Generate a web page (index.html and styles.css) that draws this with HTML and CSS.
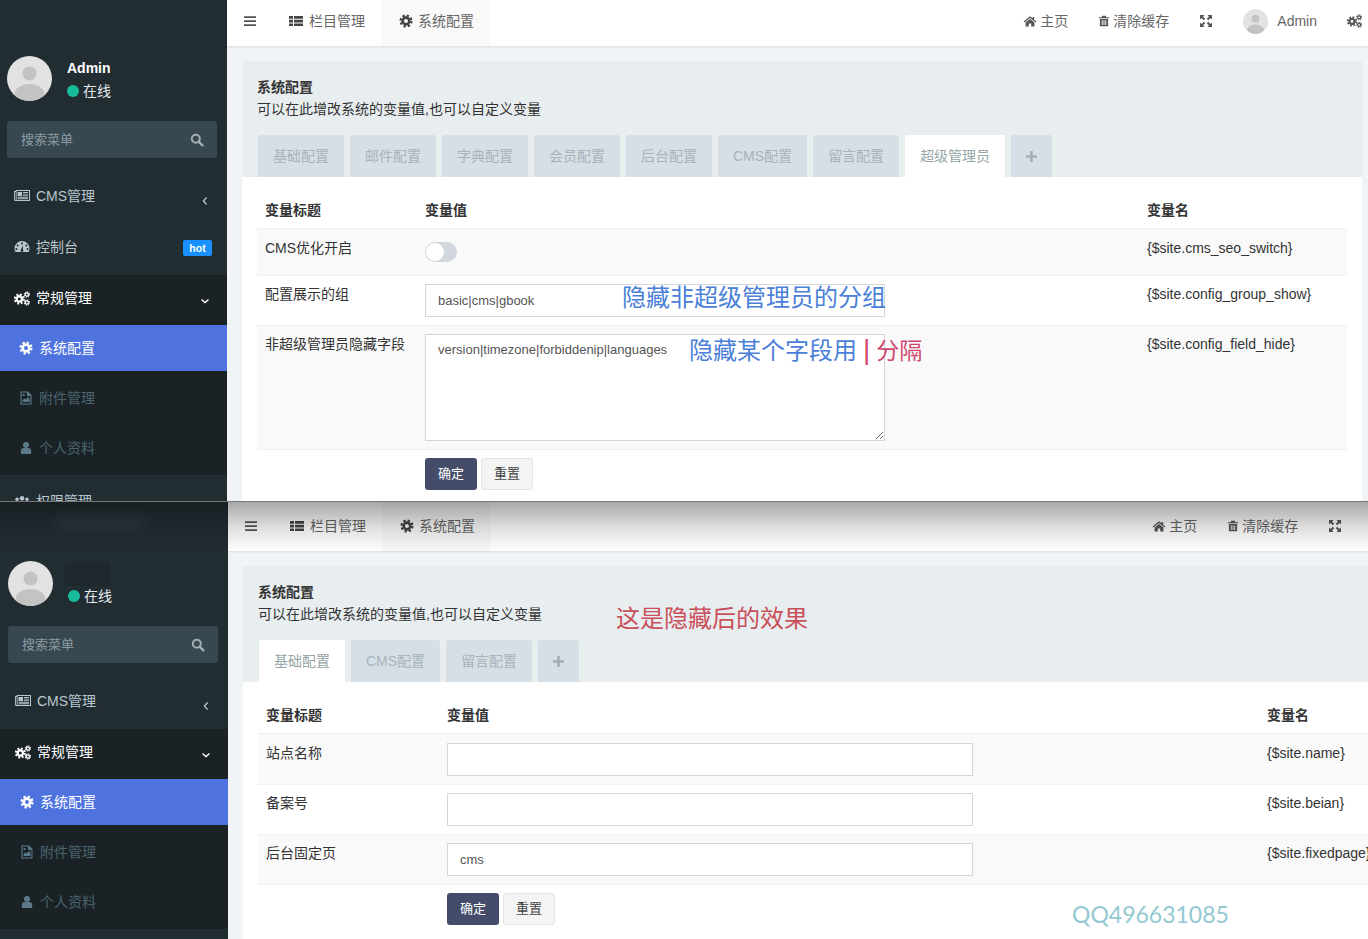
FILE: index.html
```html
<!DOCTYPE html>
<html lang="en">
<head>
    <meta charset="UTF-8">
    <meta name="viewport" content="width=device-width, initial-scale=1.0">
    <title>系统配置</title>
    <link rel="stylesheet" href="styles.css">
</head>
<body>
    <svg class="sprite" xmlns="http://www.w3.org/2000/svg">
        <symbol id="i-bars" viewBox="0 0 14 14"><path d="M1 2.2h12v1.7H1zM1 6.2h12v1.7H1zM1 10.2h12v1.7H1z"/></symbol>
        <symbol id="i-list" viewBox="0 0 14 14"><path d="M0 2h4v2.7H0zM5 2h9v2.7H5zM0 5.7h4v2.7H0zM5 5.7h9v2.7H5zM0 9.4h4v2.7H0zM5 9.4h9v2.7H5z"/></symbol>
        <symbol id="i-cog" viewBox="0 0 16 16"><circle cx="8" cy="8" r="3.8" fill="none" stroke="currentColor" stroke-width="3"/><circle cx="8" cy="8" r="6.2" fill="none" stroke="currentColor" stroke-width="2.6" stroke-dasharray="2.6 2.27"/></symbol>
        <symbol id="i-cogs" viewBox="0 0 18 16"><circle cx="6" cy="8.5" r="3" fill="none" stroke="currentColor" stroke-width="2.6"/><circle cx="6" cy="8.5" r="5" fill="none" stroke="currentColor" stroke-width="2.4" stroke-dasharray="2.1 1.83"/><circle cx="14.5" cy="3.5" r="1.8" fill="none" stroke="currentColor" stroke-width="1.5"/><circle cx="14.5" cy="3.5" r="2.9" fill="none" stroke="currentColor" stroke-width="1.3" stroke-dasharray="1.2 1.08"/><circle cx="14.5" cy="12.5" r="1.8" fill="none" stroke="currentColor" stroke-width="1.5"/><circle cx="14.5" cy="12.5" r="2.9" fill="none" stroke="currentColor" stroke-width="1.3" stroke-dasharray="1.2 1.08"/></symbol>
        <symbol id="i-home" viewBox="0 0 14 14"><path d="M7 2.2 0.6 7.6l.8.9L7 3.9l5.6 4.6.8-.9-2.2-1.9V3h-1.6v1.3zM2.6 8.6V12.4h3.2V9.4h2.4v3h3.2V8.6L7 5z"/></symbol>
        <symbol id="i-trash" viewBox="0 0 14 14"><path fill-rule="evenodd" d="M5 1h4l.8 1.6H13v1.2H1V2.6h3.2zM2.2 4.6h9.6v8.4H2.2zM4.4 6v5.6h1V6zM6.5 6v5.6h1V6zM8.6 6v5.6h1V6z"/></symbol>
        <symbol id="i-expand" viewBox="0 0 14 14"><path d="M1 1h4.6L4 2.6 6.2 4.8 4.8 6.2 2.6 4 1 5.6zM13 1v4.6L11.4 4 9.2 6.2 7.8 4.8 10 2.6 8.4 1zM1 13V8.4L2.6 10l2.2-2.2 1.4 1.4L4 11.4 5.6 13zM13 13H8.4l1.6-1.6-2.2-2.2 1.4-1.4 2.2 2.2L13 8.4z"/></symbol>
        <symbol id="i-search" viewBox="0 0 14 14"><circle cx="5.8" cy="5.8" r="4" fill="none" stroke="currentColor" stroke-width="2"/><path d="M8.6 8.6 12.4 12.4" stroke="currentColor" stroke-width="2.4" stroke-linecap="round"/></symbol>
        <symbol id="i-news" viewBox="0 0 16 14"><path fill-rule="evenodd" d="M0 2.5h1.6V1.5H16V12.5H1.5A1.5 1.5 0 0 1 0 11zM2.6 2.5V11.5H15V2.5zM.9 3.4V11a.6.6 0 0 0 .8.5V3.4zM3.6 3.6H8V7.4H3.6zM9 3.6h5v.9H9zM9 5.2h5v.9H9zM9 6.7h5v.9H9zM3.6 8.3H14v.9H3.6zM3.6 9.8H14v.9H3.6z"/></symbol>
        <symbol id="i-dash" viewBox="0 0 16 14"><path fill-rule="evenodd" d="M8 1.5A7.5 7.5 0 0 0 .5 9c0 1.4.4 2.6 1 3.5h13c.6-.9 1-2.1 1-3.5A7.5 7.5 0 0 0 8 1.5zM8 3a1 1 0 1 1 0 2 1 1 0 0 1 0-2zM3.6 5a1 1 0 1 1 0 2 1 1 0 0 1 0-2zM12.4 5a1 1 0 1 1 0 2 1 1 0 0 1 0-2zM2.4 8.6a1 1 0 1 1 0 2 1 1 0 0 1 0-2zM13.6 8.6a1 1 0 1 1 0 2 1 1 0 0 1 0-2zM8.7 6 9 10a1.4 1.4 0 1 1-2 0z"/></symbol>
        <symbol id="i-file" viewBox="0 0 14 14"><path fill-rule="evenodd" d="M1.5 0.5H9L12.5 4V13.5H1.5zM2.6 1.6V12.4H11.4V5H8V1.6zM3.6 3h2v2h-2zM3.6 11V9l2-1.6 1.4 1 2-2.4 1.5 1.8V11z"/></symbol>
        <symbol id="i-user" viewBox="0 0 14 14"><circle cx="7" cy="4" r="3"/><path d="M1.8 13V10a3 3 0 0 1 3-3h4.4a3 3 0 0 1 3 3v3z"/></symbol>
        <symbol id="i-users" viewBox="0 0 18 14"><circle cx="9" cy="4.5" r="2.6"/><path d="M5 12V10a2.5 2.5 0 0 1 2.5-2.5h3A2.5 2.5 0 0 1 13 10v2z"/><circle cx="3.4" cy="5.6" r="1.9"/><circle cx="14.6" cy="5.6" r="1.9"/><path d="M.5 11V9.4A1.8 1.8 0 0 1 2.3 8h1.9L4 11zM17.5 11V9.4A1.8 1.8 0 0 0 15.7 8h-1.9L14 11z"/></symbol>
        <symbol id="i-left" viewBox="0 0 8 10"><path d="M5.6 1.5 2.4 5l3.2 3.5" fill="none" stroke="currentColor" stroke-width="1.3"/></symbol>
        <symbol id="i-down" viewBox="0 0 10 8"><path d="M1.5 2.4 5 5.6l3.5-3.2" fill="none" stroke="currentColor" stroke-width="1.3"/></symbol>
        <symbol id="i-plus" viewBox="0 0 12 12"><path d="M4.6 0h2.8v4.6H12v2.8H7.4V12H4.6V7.4H0V4.6h4.6z"/></symbol>
        <symbol id="i-avatar" viewBox="0 0 45 45"><clipPath id="avatar-clip"><circle cx="22.5" cy="22.5" r="22.5"/></clipPath><g clip-path="url(#avatar-clip)"><rect width="45" height="45" fill="#e2e2e2"/><circle cx="22.5" cy="17.5" r="7" fill="#c3c3c3"/><ellipse cx="22.5" cy="38" rx="15" ry="10" fill="#c3c3c3"/></g></symbol>
    </svg>

    <!-- top screenshot -->
    <section class="shot shot-a">
        <aside class="sidebar">
            <div class="user-panel">
                <svg class="avatar"><use href="#i-avatar"/></svg>
                <div class="user-info">
                    <div class="user-name">Admin</div>
                    <div class="user-state"><span class="dot"></span>在线</div>
                </div>
            </div>
            <div class="side-search">
                <span>搜索菜单</span>
                <svg class="ico"><use href="#i-search"/></svg>
            </div>
            <ul class="menu">
                <li class="menu-item"><svg class="ico"><use href="#i-news"/></svg><span>CMS管理</span><svg class="arrow"><use href="#i-left"/></svg></li>
                <li class="menu-item"><svg class="ico"><use href="#i-dash"/></svg><span>控制台</span><b class="hot">hot</b></li>
                <li class="menu-item menu-open"><svg class="ico"><use href="#i-cogs"/></svg><span>常规管理</span><svg class="arrow"><use href="#i-down"/></svg></li>
                <li class="sub-item sub-active"><svg class="ico"><use href="#i-cog"/></svg><span>系统配置</span></li>
                <li class="sub-item sub-middle"><svg class="ico"><use href="#i-file"/></svg><span>附件管理</span></li>
                <li class="sub-item sub-last"><svg class="ico"><use href="#i-user"/></svg><span>个人资料</span></li>
                <li class="menu-item menu-after"><svg class="ico"><use href="#i-users"/></svg><span>权限管理</span></li>
            </ul>
        </aside>
        <div class="main">
            <nav class="navbar">
                <div class="nav-left">
                    <svg class="ico nav-toggle"><use href="#i-bars"/></svg>
                    <a class="nav-link"><svg class="ico"><use href="#i-list"/></svg>栏目管理</a>
                    <a class="nav-link nav-current"><svg class="ico"><use href="#i-cog"/></svg>系统配置</a>
                </div>
                <div class="nav-right">
                    <a class="nav-tool"><svg class="ico"><use href="#i-home"/></svg>主页</a>
                    <a class="nav-tool"><svg class="ico ico-trash"><use href="#i-trash"/></svg>清除缓存</a>
                    <a class="nav-tool"><svg class="ico ico-expand"><use href="#i-expand"/></svg></a>
                    <a class="nav-tool"><svg class="avatar-small"><use href="#i-avatar"/></svg>Admin</a>
                    <a class="nav-tool"><svg class="ico ico-cogs"><use href="#i-cogs"/></svg></a>
                </div>
            </nav>
            <div class="content">
                <div class="panel">
                    <div class="panel-head">
                        <div class="panel-title">系统配置</div>
                        <div class="panel-desc">可以在此增改系统的变量值,也可以自定义变量</div>
                        <ul class="tabs">
                            <li>基础配置</li>
                            <li>邮件配置</li>
                            <li>字典配置</li>
                            <li>会员配置</li>
                            <li>后台配置</li>
                            <li>CMS配置</li>
                            <li>留言配置</li>
                            <li class="tab-active">超级管理员</li>
                            <li class="tab-add"><svg class="ico"><use href="#i-plus"/></svg></li>
                        </ul>
                    </div>
                    <div class="panel-body">
                        <table class="config">
                            <thead>
                                <tr><th class="col-title">变量标题</th><th class="col-value">变量值</th><th>变量名</th></tr>
                            </thead>
                            <tbody>
                                <tr class="row-odd row-switch">
                                    <td>CMS优化开启</td>
                                    <td><div class="switch"></div></td>
                                    <td>{$site.cms_seo_switch}</td>
                                </tr>
                                <tr>
                                    <td>配置展示的组</td>
                                    <td><input class="field" type="text" value="basic|cms|gbook"></td>
                                    <td>{$site.config_group_show}</td>
                                </tr>
                                <tr class="row-odd">
                                    <td>非超级管理员隐藏字段</td>
                                    <td><textarea class="field field-area">version|timezone|forbiddenip|languages</textarea></td>
                                    <td>{$site.config_field_hide}</td>
                                </tr>
                                <tr>
                                    <td></td>
                                    <td><button class="btn btn-ok">确定</button><button class="btn btn-reset">重置</button></td>
                                    <td></td>
                                </tr>
                            </tbody>
                        </table>
                    </div>
                </div>
            </div>
        </div>
        <div class="note note-group">隐藏非超级管理员的分组</div>
        <div class="note note-field">隐藏某个字段用<i class="note-pipe">|</i><em>分隔</em></div>
    </section>

    <!-- bottom screenshot -->
    <section class="shot shot-b">
        <aside class="sidebar">
            <div class="smudge"></div>
            <div class="user-panel">
                <svg class="avatar"><use href="#i-avatar"/></svg>
                <div class="user-info">
                    <div class="user-name user-hidden"></div>
                    <div class="user-state"><span class="dot"></span>在线</div>
                </div>
            </div>
            <div class="side-search">
                <span>搜索菜单</span>
                <svg class="ico"><use href="#i-search"/></svg>
            </div>
            <ul class="menu">
                <li class="menu-item"><svg class="ico"><use href="#i-news"/></svg><span>CMS管理</span><svg class="arrow"><use href="#i-left"/></svg></li>
                <li class="menu-item menu-open"><svg class="ico"><use href="#i-cogs"/></svg><span>常规管理</span><svg class="arrow"><use href="#i-down"/></svg></li>
                <li class="sub-item sub-active"><svg class="ico"><use href="#i-cog"/></svg><span>系统配置</span></li>
                <li class="sub-item sub-middle"><svg class="ico"><use href="#i-file"/></svg><span>附件管理</span></li>
                <li class="sub-item sub-last"><svg class="ico"><use href="#i-user"/></svg><span>个人资料</span></li>
            </ul>
        </aside>
        <div class="main">
            <nav class="navbar">
                <div class="nav-left">
                    <svg class="ico nav-toggle"><use href="#i-bars"/></svg>
                    <a class="nav-link"><svg class="ico"><use href="#i-list"/></svg>栏目管理</a>
                    <a class="nav-link nav-current"><svg class="ico"><use href="#i-cog"/></svg>系统配置</a>
                </div>
                <div class="nav-right">
                    <a class="nav-tool"><svg class="ico"><use href="#i-home"/></svg>主页</a>
                    <a class="nav-tool"><svg class="ico ico-trash"><use href="#i-trash"/></svg>清除缓存</a>
                    <a class="nav-tool"><svg class="ico ico-expand"><use href="#i-expand"/></svg></a>
                    <a class="nav-tool"><svg class="avatar-small"><use href="#i-avatar"/></svg>Admin</a>
                    <a class="nav-tool"><svg class="ico ico-cogs"><use href="#i-cogs"/></svg></a>
                </div>
            </nav>
            <div class="content">
                <div class="panel">
                    <div class="panel-head">
                        <div class="panel-title">系统配置</div>
                        <div class="panel-desc">可以在此增改系统的变量值,也可以自定义变量</div>
                        <ul class="tabs">
                            <li class="tab-active">基础配置</li>
                            <li>CMS配置</li>
                            <li>留言配置</li>
                            <li class="tab-add"><svg class="ico"><use href="#i-plus"/></svg></li>
                        </ul>
                    </div>
                    <div class="panel-body">
                        <table class="config">
                            <thead>
                                <tr><th class="col-title">变量标题</th><th class="col-value">变量值</th><th>变量名</th></tr>
                            </thead>
                            <tbody>
                                <tr class="row-odd">
                                    <td>站点名称</td>
                                    <td><input class="field" type="text" value=""></td>
                                    <td>{$site.name}</td>
                                </tr>
                                <tr>
                                    <td>备案号</td>
                                    <td><input class="field" type="text" value=""></td>
                                    <td>{$site.beian}</td>
                                </tr>
                                <tr class="row-odd">
                                    <td>后台固定页</td>
                                    <td><input class="field" type="text" value="cms"></td>
                                    <td>{$site.fixedpage}</td>
                                </tr>
                                <tr>
                                    <td></td>
                                    <td><button class="btn btn-ok">确定</button><button class="btn btn-reset">重置</button></td>
                                    <td></td>
                                </tr>
                            </tbody>
                        </table>
                    </div>
                </div>
            </div>
        </div>
        <div class="note note-result">这是隐藏后的效果</div>
        <div class="note note-qq">QQ496631085</div>
    </section>
</body>
</html>
```

FILE: styles.css
```css
* {
    box-sizing: border-box;
}
html, body {
    margin: 0;
    padding: 0;
    height: 939px;
    overflow: hidden;
}
body {
    background-color: #f1f4f6;
    color: #444;
    font-family: "Liberation Sans", "Noto Sans CJK SC", sans-serif;
    font-size: 14px;
    line-height: 20px;
}
ul {
    list-style: none;
    margin: 0;
    padding: 0;
}
.sprite {
    position: absolute;
    width: 0;
    height: 0;
}
.ico {
    width: 14px;
    height: 14px;
    fill: currentColor;
    flex: none;
}

/* the picture is two screenshots stacked */
.shot {
    position: relative;
    display: flex;
    overflow: hidden;
}
.shot-a {
    height: 502px;
    --side-x: 0px;
    --side-top: 56px;
    --nav-height: 46px;
    --nav-lift: 4px;
    border-bottom: 1px solid #777;
}
.shot-b {
    height: 437px;
    --side-x: 1px;
    --side-top: 59px;
    --nav-height: 49px;
    --nav-lift: 1px;
}
/* shadow the top screenshot drops on the bottom one */
.shot-b::before {
    content: "";
    position: absolute;
    left: 228px;
    right: 0;
    top: 0;
    height: 50px;
    background: linear-gradient(rgba(0, 0, 0, 0.34), rgba(0, 0, 0, 0.12) 26px, rgba(0, 0, 0, 0));
    z-index: 3;
}
.shot-b::after {
    content: "";
    position: absolute;
    left: 0;
    width: 228px;
    top: 0;
    height: 50px;
    background: linear-gradient(rgba(0, 0, 0, 0.28), rgba(0, 0, 0, 0));
    z-index: 3;
}

/* sidebar */
.sidebar {
    position: relative;
    flex: none;
    width: 227px;
    padding-top: var(--side-top);
    background-color: #222d32;
    color: #b8c7ce;
}
.shot-b .sidebar {
    width: 228px;
}
.user-panel {
    display: flex;
    align-items: center;
    margin-left: calc(7px + var(--side-x));
    height: 45px;
}
.avatar {
    width: 45px;
    height: 45px;
    flex: none;
}
.user-info {
    margin-left: 15px;
}
.user-name {
    color: #fff;
    font-weight: bold;
    height: 20px;
    margin-top: 1px;
    margin-bottom: 3px;
}
.user-hidden {
    width: 45px;
    height: 24px;
    margin-top: 0;
    margin-bottom: 0;
    margin-left: -3px;
    background-color: #1f282d;
}
.user-state {
    display: flex;
    align-items: center;
    color: #e4e9ec;
}
.dot {
    width: 12px;
    height: 12px;
    border-radius: 50%;
    background-color: #18bc9c;
    margin-right: 4px;
}
.smudge {
    position: absolute;
    left: 55px;
    top: 12px;
    width: 90px;
    height: 16px;
    background-color: #2a363c;
    filter: blur(5px);
}
.side-search {
    display: flex;
    justify-content: space-between;
    align-items: center;
    height: 37px;
    margin: 20px 10px 0 calc(7px + var(--side-x));
    padding: 0 13px 0 14px;
    background-color: #374850;
    border-radius: 3px;
    color: #8b9ba3;
}
.side-search span {
    font-size: 13px;
}
.side-search .ico {
    color: #a3adb2;
}
.menu {
    margin-top: 13px;
}
.menu-item, .sub-item {
    display: flex;
    align-items: center;
    padding-left: calc(14px + var(--side-x));
}
.menu-item {
    position: relative;
    height: 51px;
    padding-bottom: 2px;
}
.menu-item .ico {
    width: 16px;
    height: 15px;
    margin-right: 6px;
}
.menu-after {
    padding-bottom: 0;
}
.arrow {
    position: absolute;
    width: 10px;
    height: 10px;
    right: 17px;
    top: 25px;
    color: #b8c7ce;
}
.hot {
    position: absolute;
    left: 183px;
    top: 18px;
    width: 29px;
    height: 16px;
    border-radius: 2px;
    background-color: #1890ff;
    color: #fff;
    font-size: 10.5px;
    line-height: 16px;
    text-align: center;
}
.menu-open {
    height: 50px;
    margin-top: 2px;
    padding-bottom: 4px;
    background-color: #1a2226;
    color: #fff;
}
.menu-open .arrow {
    color: #fff;
    top: 21px;
}
.sub-item {
    height: 52px;
    padding-left: calc(19px + var(--side-x));
    background-color: #1a2226;
    color: #4b646f;
}
.sub-item .ico {
    width: 14px;
    height: 14px;
    margin-right: 6px;
    color: #5b7a89;
}
.sub-middle {
    padding-top: 2px;
}
.sub-last {
    padding-bottom: 2px;
}
.sub-active {
    height: 46px;
    background-color: #4e73df;
    color: #fff;
}
.sub-active .ico {
    color: #fff;
}

/* main column */
.main {
    flex: none;
    width: 1141px;
}
.shot-b .main {
    width: 1269px;
}
.navbar {
    position: relative;
    display: flex;
    justify-content: space-between;
    height: var(--nav-height);
    padding-right: 6px;
    background-color: #fff;
    color: #666;
    box-shadow: 0 1px 2px rgba(0, 0, 0, 0.1);
}
.nav-left, .nav-right {
    display: flex;
    align-items: center;
}
.nav-right {
    gap: 30px;
    padding-bottom: var(--nav-lift);
}
.nav-toggle {
    margin-left: 16px;
    margin-right: 14px;
    margin-bottom: var(--nav-lift);
    color: #555;
}
.nav-link {
    display: flex;
    align-items: center;
    height: 100%;
    padding: 0 16px var(--nav-lift) 18px;
    white-space: nowrap;
}
.nav-link .ico {
    margin-right: 6px;
    color: #444;
}
.nav-current {
    width: 109px;
    padding-right: 0;
    background-color: #f9f9f9;
}
.nav-current .ico {
    margin-right: 5px;
}
.nav-tool {
    display: flex;
    align-items: center;
    white-space: nowrap;
}
.nav-tool .ico {
    margin-right: 3px;
    color: #555;
}
.nav-tool .ico-trash {
    width: 12px;
}
.nav-tool .ico-expand {
    margin-right: 0;
}
.nav-tool .ico-cogs {
    width: 15px;
    margin-right: 0;
}
.avatar-small {
    width: 25px;
    height: 25px;
    margin-right: 9px;
}
.content {
    padding: 15px 6px 0 15px;
}
.panel-head {
    padding: 16px 15px 0;
    background-color: #e8edf0;
}
.panel-title {
    font-weight: bold;
    color: #333;
}
.panel-desc {
    margin: 2px 0 16px;
    color: #333;
}
.tabs {
    display: flex;
    gap: 6px;
    padding-left: 1px;
}
.tabs li {
    height: 42px;
    padding: 0 15px;
    line-height: 42px;
    background-color: #d6dfe6;
    color: #a8b3ba;
    border-radius: 2px 2px 0 0;
}
.tabs .tab-active {
    background-color: #fff;
    color: #95a5a6;
}
.tabs .tab-add {
    display: flex;
    align-items: center;
    color: #a2aeb6;
}
.tab-add .ico {
    width: 11px;
    height: 11px;
}
.panel-body {
    padding: 15px;
    background-color: #fff;
}

/* config table */
.config {
    width: 100%;
    border-collapse: collapse;
    table-layout: fixed;
    color: #333;
}
.config th {
    padding: 8px;
    text-align: left;
    font-weight: bold;
    color: #333;
}
.config td {
    padding: 8px;
    border-top: 1px solid #f1f1f1;
    vertical-align: top;
}
.config tbody tr:first-child td {
    padding-top: 9px;
}
.shot-a .col-title {
    width: 160px;
}
.shot-a .col-value {
    width: 722px;
}
.shot-b .col-title {
    width: 181px;
}
.shot-b .col-value {
    width: 820px;
}
.row-odd td {
    background-color: #f9f9f9;
}
.row-switch td {
    height: 47px;
}
.switch {
    position: relative;
    width: 32px;
    height: 20px;
    margin-top: 4px;
    border-radius: 10px;
    background-color: #d2d6de;
}
.switch::before {
    content: "";
    position: absolute;
    left: 1px;
    top: 1px;
    width: 18px;
    height: 18px;
    border-radius: 50%;
    background-color: #fff;
}
.field {
    display: block;
    width: 460px;
    height: 33px;
    padding: 6px 12px;
    border: 1px solid #d2d6de;
    border-radius: 0;
    background-color: #fff;
    color: #555;
    font-family: "Liberation Sans", "Noto Sans CJK SC", sans-serif;
    font-size: 13px;
    line-height: 20px;
}
.shot-b .field {
    width: 526px;
}
.field-area {
    height: 107px;
    padding-top: 5px;
}
.btn {
    width: 52px;
    height: 32px;
    margin-right: 4px;
    padding: 0;
    border-radius: 3px;
    font-family: "Liberation Sans", "Noto Sans CJK SC", sans-serif;
    font-size: 13px;
    line-height: 28px;
    vertical-align: top;
}
.btn-ok {
    border: none;
    background-color: #444c69;
    color: #fff;
}
.btn-reset {
    border: 1px solid #e4e4e4;
    background-color: #f4f4f4;
    color: #444;
}

/* notes written over the screenshots */
.note {
    position: absolute;
    font-size: 24px;
    line-height: 30px;
    white-space: nowrap;
    z-index: 4;
}
.note-group {
    left: 622px;
    top: 283px;
    color: #4a80d8;
}
.note-field {
    left: 689px;
    top: 335px;
    color: #4a80d8;
}
.note-pipe {
    margin: 0 6px;
    font-style: normal;
    font-size: 28px;
    color: #d0466e;
}
.note-field em {
    font-style: normal;
    font-size: 23px;
    color: #d0466e;
}
.note-result {
    left: 616px;
    top: 102px;
    color: #c9505a;
}
.note-qq {
    left: 1072px;
    top: 397px;
    color: #92c9d1;
    font-family: Lato, sans-serif;
    font-size: 23px;
}
```
